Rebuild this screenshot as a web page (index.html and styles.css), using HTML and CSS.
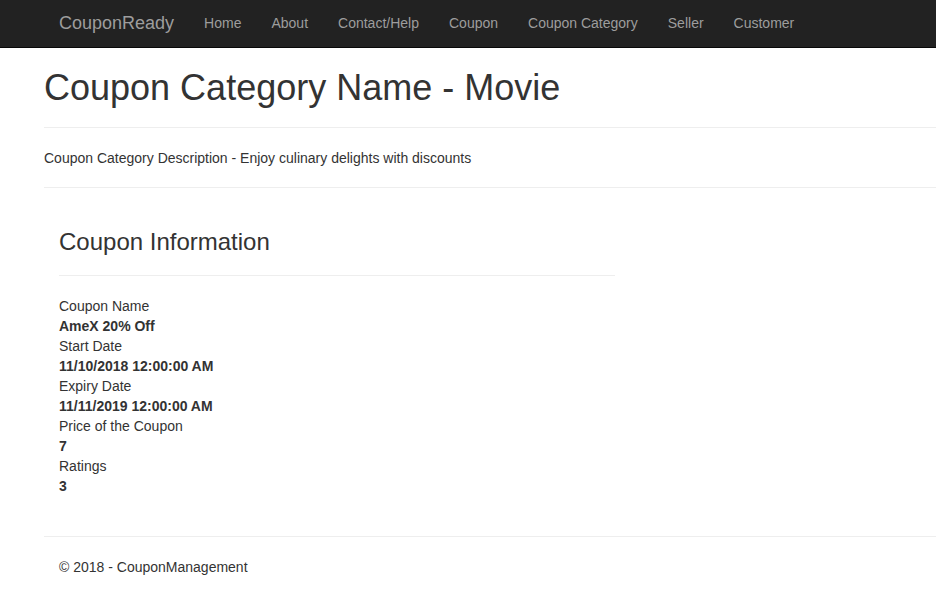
FILE: index.html
```html
<!DOCTYPE html>
<html>
<head>
<meta charset="utf-8">
<title>Coupon Category - CouponReady</title>
<link rel="stylesheet" href="styles.css">
</head>
<body>
<header class="navbar">
  <a class="brand" href="#">CouponReady</a>
  <nav class="nav">
    <a href="#">Home</a>
    <a href="#">About</a>
    <a href="#">Contact/Help</a>
    <a href="#">Coupon</a>
    <a href="#">Coupon Category</a>
    <a href="#">Seller</a>
    <a href="#">Customer</a>
  </nav>
</header>
<main class="content">
  <h1 class="title">Coupon Category Name - Movie</h1>
  <hr class="rule">
  <p class="desc">Coupon Category Description - Enjoy culinary delights with discounts</p>
  <hr class="rule">
  <section class="info">
    <h3 class="info-title">Coupon Information</h3>
    <hr class="rule info-rule">
    <dl class="fields">
      <dt>Coupon Name</dt>
      <dd>AmeX 20% Off</dd>
      <dt>Start Date</dt>
      <dd>11/10/2018 12:00:00 AM</dd>
      <dt>Expiry Date</dt>
      <dd>11/11/2019 12:00:00 AM</dd>
      <dt>Price of the Coupon</dt>
      <dd>7</dd>
      <dt>Ratings</dt>
      <dd>3</dd>
    </dl>
  </section>
  <footer class="footer">
    <hr class="rule">
    <p class="copy">&copy; 2018 - CouponManagement</p>
  </footer>
</main>
</body>
</html>
```
FILE: styles.css
```css
* { box-sizing: border-box; }
html, body {
  margin: 0;
  padding: 0;
  overflow: hidden;
}
body {
  font-family: "Liberation Sans", Arial, Helvetica, sans-serif;
  font-size: 14px;
  line-height: 20px;
  color: #333;
  background: #fff;
}
.navbar {
  height: 48px;
  background: #222;
  border-bottom: 1px solid #080808;
  display: flex;
  align-items: center;
  padding-left: 44px;
  padding-bottom: 2px;
}
.brand {
  font-size: 18px;
  line-height: 20px;
  color: #9d9d9d;
  text-decoration: none;
  padding: 0 15px;
}
.nav {
  display: flex;
}
.nav a {
  color: #9d9d9d;
  text-decoration: none;
  padding: 0 15px;
  line-height: 20px;
}
.content {
  padding-left: 44px;
}
.title {
  font-size: 36px;
  font-weight: 500;
  line-height: 1.1;
  margin: 20px 0 0 0;
}
.rule {
  border: 0;
  border-top: 1px solid #eee;
  margin: 19px 0 20px 0;
  height: 0;
}
.desc {
  margin: 0;
}
.info {
  padding-left: 15px;
}
.info-title {
  font-size: 24px;
  font-weight: 500;
  line-height: 1.1;
  margin: 41px 0 0 0;
}
.info-rule {
  width: 556px;
  margin-top: 20px;
}
.fields {
  margin: 0;
}
.fields dt {
  font-weight: normal;
}
.fields dd {
  margin: 0;
  font-weight: bold;
}
.footer {
  padding-top: 21px;
}
.copy {
  margin: 0 0 0 15px;
}
```
